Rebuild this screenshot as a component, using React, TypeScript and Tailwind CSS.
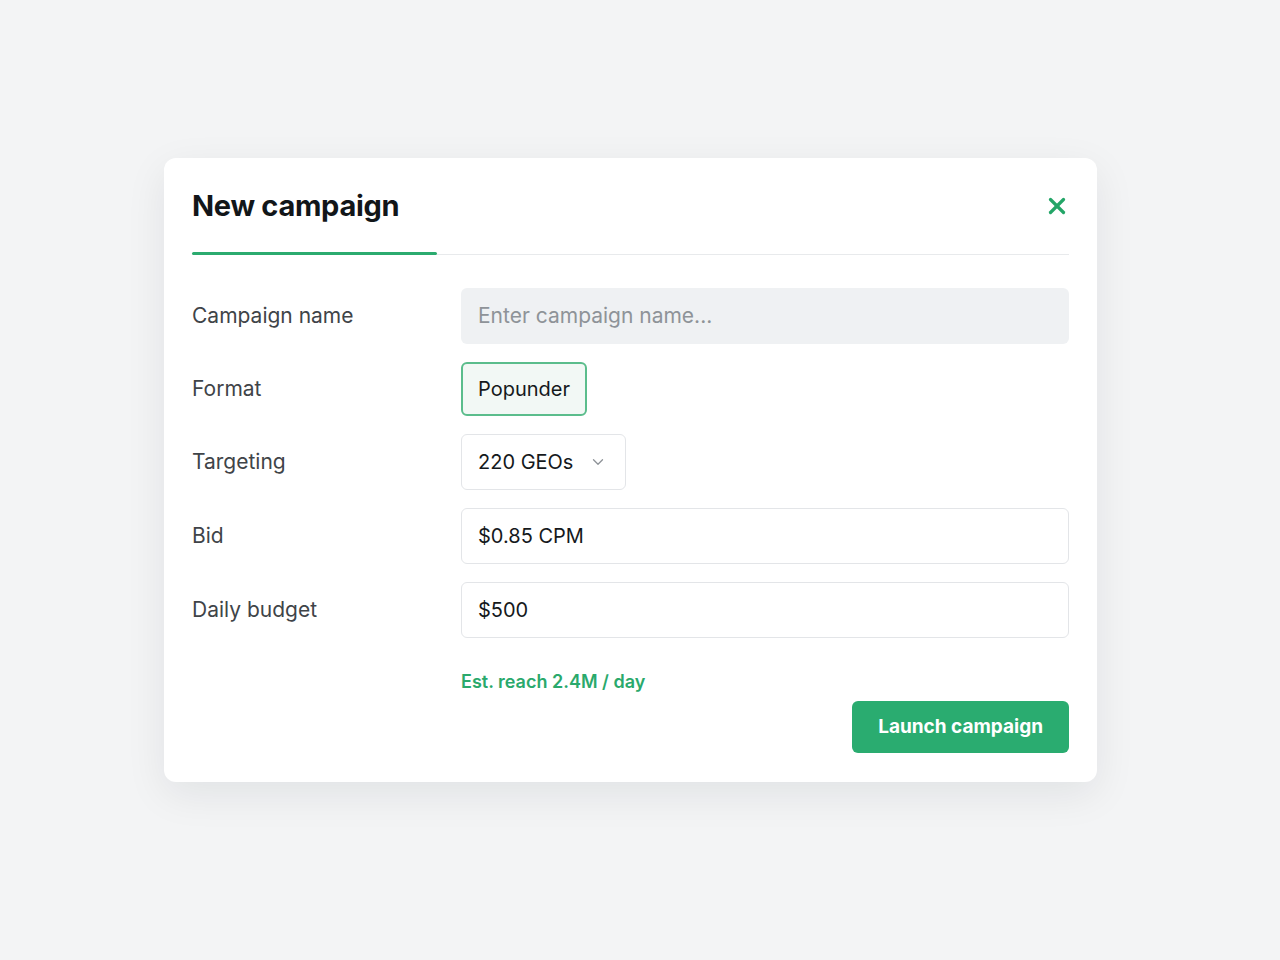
import { X, ChevronDown } from "lucide-react";

const font = { fontFamily: "Inter, 'Noto Sans', sans-serif" };

function Row({ label, children }: { label: string; children: React.ReactNode }) {
  return (
    <div className="grid grid-cols-[269px_1fr] items-center">
      <div className="text-[21px] text-[#3f4448]">{label}</div>
      <div>{children}</div>
    </div>
  );
}

export default function App() {
  return (
    <div
      className="flex min-h-[960px] w-full items-start bg-[#f3f4f5] pl-[164px] pt-[158px]"
      style={font}
    >
      <div className="w-[933px] rounded-[12px] bg-white px-[28px] pb-[29px] pt-[28px] shadow-[0_12px_40px_rgba(17,24,39,0.08)]">
        <div className="flex items-center justify-between">
          <h1 className="text-[29px] font-bold leading-[40px] tracking-[-0.01em] text-[#121619]">
            New campaign
          </h1>
          <button className="-mr-[1px] text-[#23a567]">
            <X className="h-[26px] w-[26px]" strokeWidth={3} />
          </button>
        </div>

        <div className="mt-[26px] flex items-end">
          <div className="h-[3px] w-[245px] rounded-full bg-[#2bab6f]" />
          <div className="h-px flex-1 bg-[#e8eaec]" />
        </div>

        <div className="mt-[33px] flex flex-col gap-[18px]">
          <Row label="Campaign name">
            <div className="flex h-[56px] items-center rounded-[6px] bg-[#eff1f3] px-[17px] text-[21px] text-[#8e9398]">
              Enter campaign name...
            </div>
          </Row>
          <Row label="Format">
            <div className="flex">
              <div className="flex h-[54px] items-center rounded-[6px] border-2 border-[#5bbd8c] bg-[#f2f8f5] px-[15px] text-[20px] text-[#15191c]">
                Popunder
              </div>
            </div>
          </Row>
          <Row label="Targeting">
            <div className="flex">
              <div className="flex h-[56px] items-center gap-[16px] rounded-[6px] border border-[#e3e5e8] bg-white pl-[16px] pr-[18px] text-[20px] text-[#15191c]">
                220 GEOs
                <ChevronDown className="h-[18px] w-[18px] text-[#8e9398]" strokeWidth={1.75} />
              </div>
            </div>
          </Row>
          <Row label="Bid">
            <div className="flex h-[56px] items-center rounded-[6px] border border-[#e3e5e8] bg-white px-[16px] text-[20px] text-[#15191c]">
              $0.85 CPM
            </div>
          </Row>
          <Row label="Daily budget">
            <div className="flex h-[56px] items-center rounded-[6px] border border-[#e3e5e8] bg-white px-[16px] text-[20px] text-[#15191c]">
              $500
            </div>
          </Row>
        </div>

        <div className="ml-[269px] mt-[30px] text-[18px] font-semibold text-[#2aa96c]">
          Est. reach 2.4M / day
        </div>

        <div className="mt-[6px] flex justify-end">
          <button className="flex h-[52px] items-center rounded-[6px] bg-[#2aac70] px-[26px] text-[19px] font-bold text-white">
            Launch campaign
          </button>
        </div>
      </div>
    </div>
  );
}
